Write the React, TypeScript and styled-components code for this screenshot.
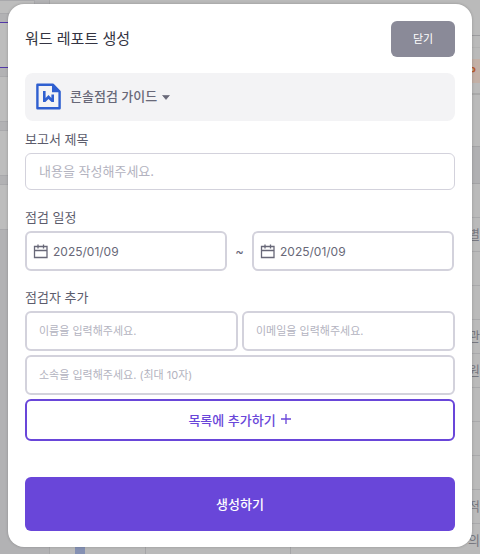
import React from "react";
import styled, { createGlobalStyle } from "styled-components";

const GlobalStyle = createGlobalStyle`
  *, *::before, *::after { box-sizing: border-box; }
  body { margin: 0; }
  body, button, input {
    font-family: Inter, "Noto Sans CJK KR", sans-serif;
  }
`;

const color = {
  purple: "#6946d9",
  border: "#d3d2dc",
  text: "#686878",
  hint: "#b3b3c0",
};

/* Both layers share one grid cell, so the dialog lies over the dashboard. */
const Screen = styled.div`
  display: grid;
  grid-template: minmax(100vh, auto) / minmax(0, 1fr);
`;

/* ---------- Dimmed dashboard ---------- */

const Dashboard = styled.div`
  grid-area: 1 / 1;
  display: flex;
  height: 100vh;
  min-height: 100%;
  overflow: hidden;
  background: #bababa;
`;

const Sidebar = styled.div`
  flex: 0 0 50px;
  display: flex;
  flex-direction: column;
  gap: 8px;
  padding-right: 14px;
  background: #b2b2b4;
  border-right: 1px solid #a6a6a8;
`;

const SideCard = styled.div<{ $active?: boolean; $height?: number }>`
  flex: none;
  height: ${(p) => p.$height ?? 46}px;
  background: #bdbdbd;
  border: 1px solid ${(p) => (p.$active ? "#5238a8" : "#a9a9ac")};
  border-left: 0;
`;

const Main = styled.div`
  flex: 1;
  min-width: 0;
  display: flex;
  flex-direction: column;
`;

const TopBar = styled.div`
  flex: none;
  height: 36px;
  border-bottom: 1px solid #9c9c9f;
`;

const TagBar = styled.div`
  flex: none;
  display: flex;
  justify-content: flex-end;
  align-items: center;
  height: 48px;
  margin-top: 11px;
  border-top: 1px solid #b2b2b2;
  border-bottom: 2px solid #a9a9a9;
`;

const Tag = styled.span`
  padding: 0 4px;
  background: #c3b0a6;
  color: #b85a2c;
  font-size: 11px;
  font-weight: 700;
  line-height: 24px;
`;

const TableHead = styled.div`
  flex: none;
  height: 38px;
  margin-top: 51px;
  background: #b0b0b2;
  border: solid #a3a3a5;
  border-width: 1px 0;
`;

const TableRow = styled.div`
  flex: none;
  display: flex;
  justify-content: flex-end;
  height: 34px;
  border-bottom: 1px solid #a9a9ab;
  color: #77777f;
  font-size: 13px;
  line-height: 33px;
  white-space: nowrap;
`;

const Chart = styled.div`
  flex: 1 0 36px;
  display: grid;
  grid-template-columns: 25px 10px 61px 145px 1fr;
`;

const ChartCell = styled.div<{ $bar?: boolean; $line?: boolean }>`
  background: ${(p) => (p.$bar ? "#8591b3" : "transparent")};
  border-right: ${(p) => (p.$line ? "1px solid #a6a6a8" : "0")};
`;

/* ---------- Dialog ---------- */

const Overlay = styled.div`
  grid-area: 1 / 1;
  z-index: 1;
  padding: 4px 8px 7px;
`;

const Dialog = styled.form`
  display: flex;
  flex-direction: column;
  padding: 17px 17px 16px;
  background: #fff;
  border-radius: 16px;
  box-shadow: 0 0 3px rgba(0, 0, 0, 0.22);
  color: ${color.text};
`;

const Header = styled.header`
  display: flex;
  align-items: center;
  justify-content: space-between;
`;

const Title = styled.h1`
  margin: 0;
  color: #343442;
  font-size: 15px;
  font-weight: 400;
  line-height: 24px;
`;

const CloseButton = styled.button`
  width: 64px;
  height: 36px;
  padding: 0 0 2px;
  border: 0;
  border-radius: 6px;
  background: #8a8a98;
  color: #fff;
  font-size: 11px;
  cursor: pointer;
`;

const GuideButton = styled.button`
  display: flex;
  align-items: center;
  height: 48px;
  margin-top: 16px;
  padding: 0 10px;
  border: 0;
  border-radius: 8px;
  background: #f3f3f5;
  color: ${color.text};
  font-size: 13px;
  font-weight: 500;
  text-align: left;
  cursor: pointer;
`;

const GuideName = styled.span`
  margin: 0 5px 0 8px;
  padding-bottom: 3px;
`;

const Section = styled.div<{ $space: number }>`
  display: flex;
  flex-direction: column;
  gap: 4px;
  margin-top: ${(p) => p.$space}px;
`;

const Label = styled.label`
  color: #5c5c6c;
  font-size: 13px;
  font-weight: 400;
  line-height: 20px;
`;

const Row = styled.div`
  display: flex;
  align-items: center;
  gap: 4px;
`;

const DateRow = styled(Row)`
  gap: 8px;
  padding-right: 1px;
`;

const TextInput = styled.input<{ $large?: boolean }>`
  flex: 1 1 0;
  width: 100%;
  min-width: 0;
  min-height: ${(p) => (p.$large ? 37 : 40)}px;
  padding: 0 ${(p) => (p.$large ? 13 : 12)}px ${(p) => (p.$large ? 2 : 0)}px;
  border: ${(p) => (p.$large ? 1 : 2)}px solid ${color.border};
  border-radius: 6px;
  background: #fff;
  color: ${color.text};
  font-size: ${(p) => (p.$large ? 13 : 11)}px;
  outline-color: ${color.purple};

  &::placeholder {
    color: ${color.hint};
    opacity: 1;
  }
`;

const DateField = styled.div`
  flex: 1 1 0;
  min-width: 0;
  display: flex;
  align-items: center;
  gap: 4px;
  height: 40px;
  padding: 0 6px;
  border: 2px solid ${color.border};
  border-radius: 6px;
`;

const DateInput = styled.input`
  flex: 1;
  min-width: 0;
  padding: 0;
  border: 0;
  outline: 0;
  background: transparent;
  color: ${color.text};
  font-size: 12px;
`;

const Tilde = styled.span`
  width: 9px;
  font-size: 13px;
  text-align: center;
`;

const AddButton = styled.button`
  display: flex;
  align-items: center;
  justify-content: center;
  gap: 4px;
  height: 42px;
  padding: 0 0 2px;
  border: 2px solid ${color.purple};
  border-radius: 6px;
  background: #fff;
  color: ${color.purple};
  font-size: 13px;
  font-weight: 500;
  cursor: pointer;
`;

const SubmitButton = styled.button`
  height: 54px;
  margin-top: 36px;
  padding: 0 0 2px;
  border: 0;
  border-radius: 6px;
  background: ${color.purple};
  color: #fff;
  font-size: 13px;
  font-weight: 500;
  cursor: pointer;
`;

const WordIcon = () => (
  <svg width="27" height="28" viewBox="0 0 27 28" fill="none" aria-hidden="true">
    <path d="M2.4 1.7h15.4l6.8 6.8v16.8H2.4z" stroke="#2f5fd0" strokeWidth="2.4" strokeLinejoin="round" />
    <path d="M17 1.5v7.8h7.8z" fill="#2f5fd0" />
    <path d="M8 8h2.6v7l2.9-2.9 2.9 2.9v-3.5H19v7.6h-2.4l-3.1-3.1-3.1 3.1H8z" fill="#2f5fd0" />
  </svg>
);

const CaretIcon = () => (
  <svg width="8" height="5" viewBox="0 0 8 5" aria-hidden="true">
    <path d="M.6.4h6.8L4 4.4z" fill={color.text} stroke={color.text} strokeWidth=".7" strokeLinejoin="round" />
  </svg>
);

const CalendarIcon = () => (
  <svg width="16" height="16" viewBox="0 0 16 16" fill="none" stroke={color.text} strokeWidth="1.3" aria-hidden="true">
    <path d="M1.5 3.5h12.5v11H1.5zM1.5 7.5h12.5M5 1.5v4M10.5 1.5v4" />
  </svg>
);

const PlusIcon = () => (
  <svg width="12" height="12" viewBox="0 0 12 12" stroke={color.purple} strokeWidth="1.3" aria-hidden="true">
    <path d="M6 1v10M1 6h10" />
  </svg>
);

const rows = ["", "별", "", "", "관", "원", "", "", "", "적"];

export default function App() {
  return (
    <>
      <GlobalStyle />
      <Screen>
        <Dashboard aria-hidden="true">
          <Sidebar>
            <SideCard $height={14} />
            <SideCard $active />
            <SideCard />
            <SideCard />
            <SideCard />
          </Sidebar>
          <Main>
            <TopBar />
            <TagBar>
              <Tag>P</Tag>
            </TagBar>
            <TableHead />
            {rows.map((text, i) => (
              <TableRow key={i}>{text}</TableRow>
            ))}
            <Chart>
              <ChartCell />
              <ChartCell $bar />
              <ChartCell $line />
              <ChartCell $line />
              <TableRow>의</TableRow>
            </Chart>
          </Main>
        </Dashboard>

        <Overlay>
          <Dialog
            role="dialog"
            aria-modal="true"
            aria-labelledby="report-dialog-title"
            onSubmit={(e) => e.preventDefault()}
          >
            <Header>
              <Title id="report-dialog-title">워드 레포트 생성</Title>
              <CloseButton type="button">닫기</CloseButton>
            </Header>

            <GuideButton type="button" aria-haspopup="listbox">
              <WordIcon />
              <GuideName>콘솔점검 가이드</GuideName>
              <CaretIcon />
            </GuideButton>

            <Section $space={8}>
              <Label htmlFor="report-title">보고서 제목</Label>
              <TextInput $large id="report-title" placeholder="내용을 작성해주세요." />
            </Section>

            <Section $space={17}>
              <Label htmlFor="start-date">점검 일정</Label>
              <DateRow>
                <DateField>
                  <CalendarIcon />
                  <DateInput id="start-date" defaultValue="2025/01/09" />
                </DateField>
                <Tilde>~</Tilde>
                <DateField>
                  <CalendarIcon />
                  <DateInput aria-label="점검 종료일" defaultValue="2025/01/09" />
                </DateField>
              </DateRow>
            </Section>

            <Section $space={16}>
              <Label htmlFor="inspector-name">점검자 추가</Label>
              <Row>
                <TextInput id="inspector-name" placeholder="이름을 입력해주세요." />
                <TextInput type="email" aria-label="이메일" placeholder="이메일을 입력해주세요." />
              </Row>
              <TextInput aria-label="소속" maxLength={10} placeholder="소속을 입력해주세요. (최대 10자)" />
              <AddButton type="button">
                목록에 추가하기
                <PlusIcon />
              </AddButton>
            </Section>

            <SubmitButton type="submit">생성하기</SubmitButton>
          </Dialog>
        </Overlay>
      </Screen>
    </>
  );
}
